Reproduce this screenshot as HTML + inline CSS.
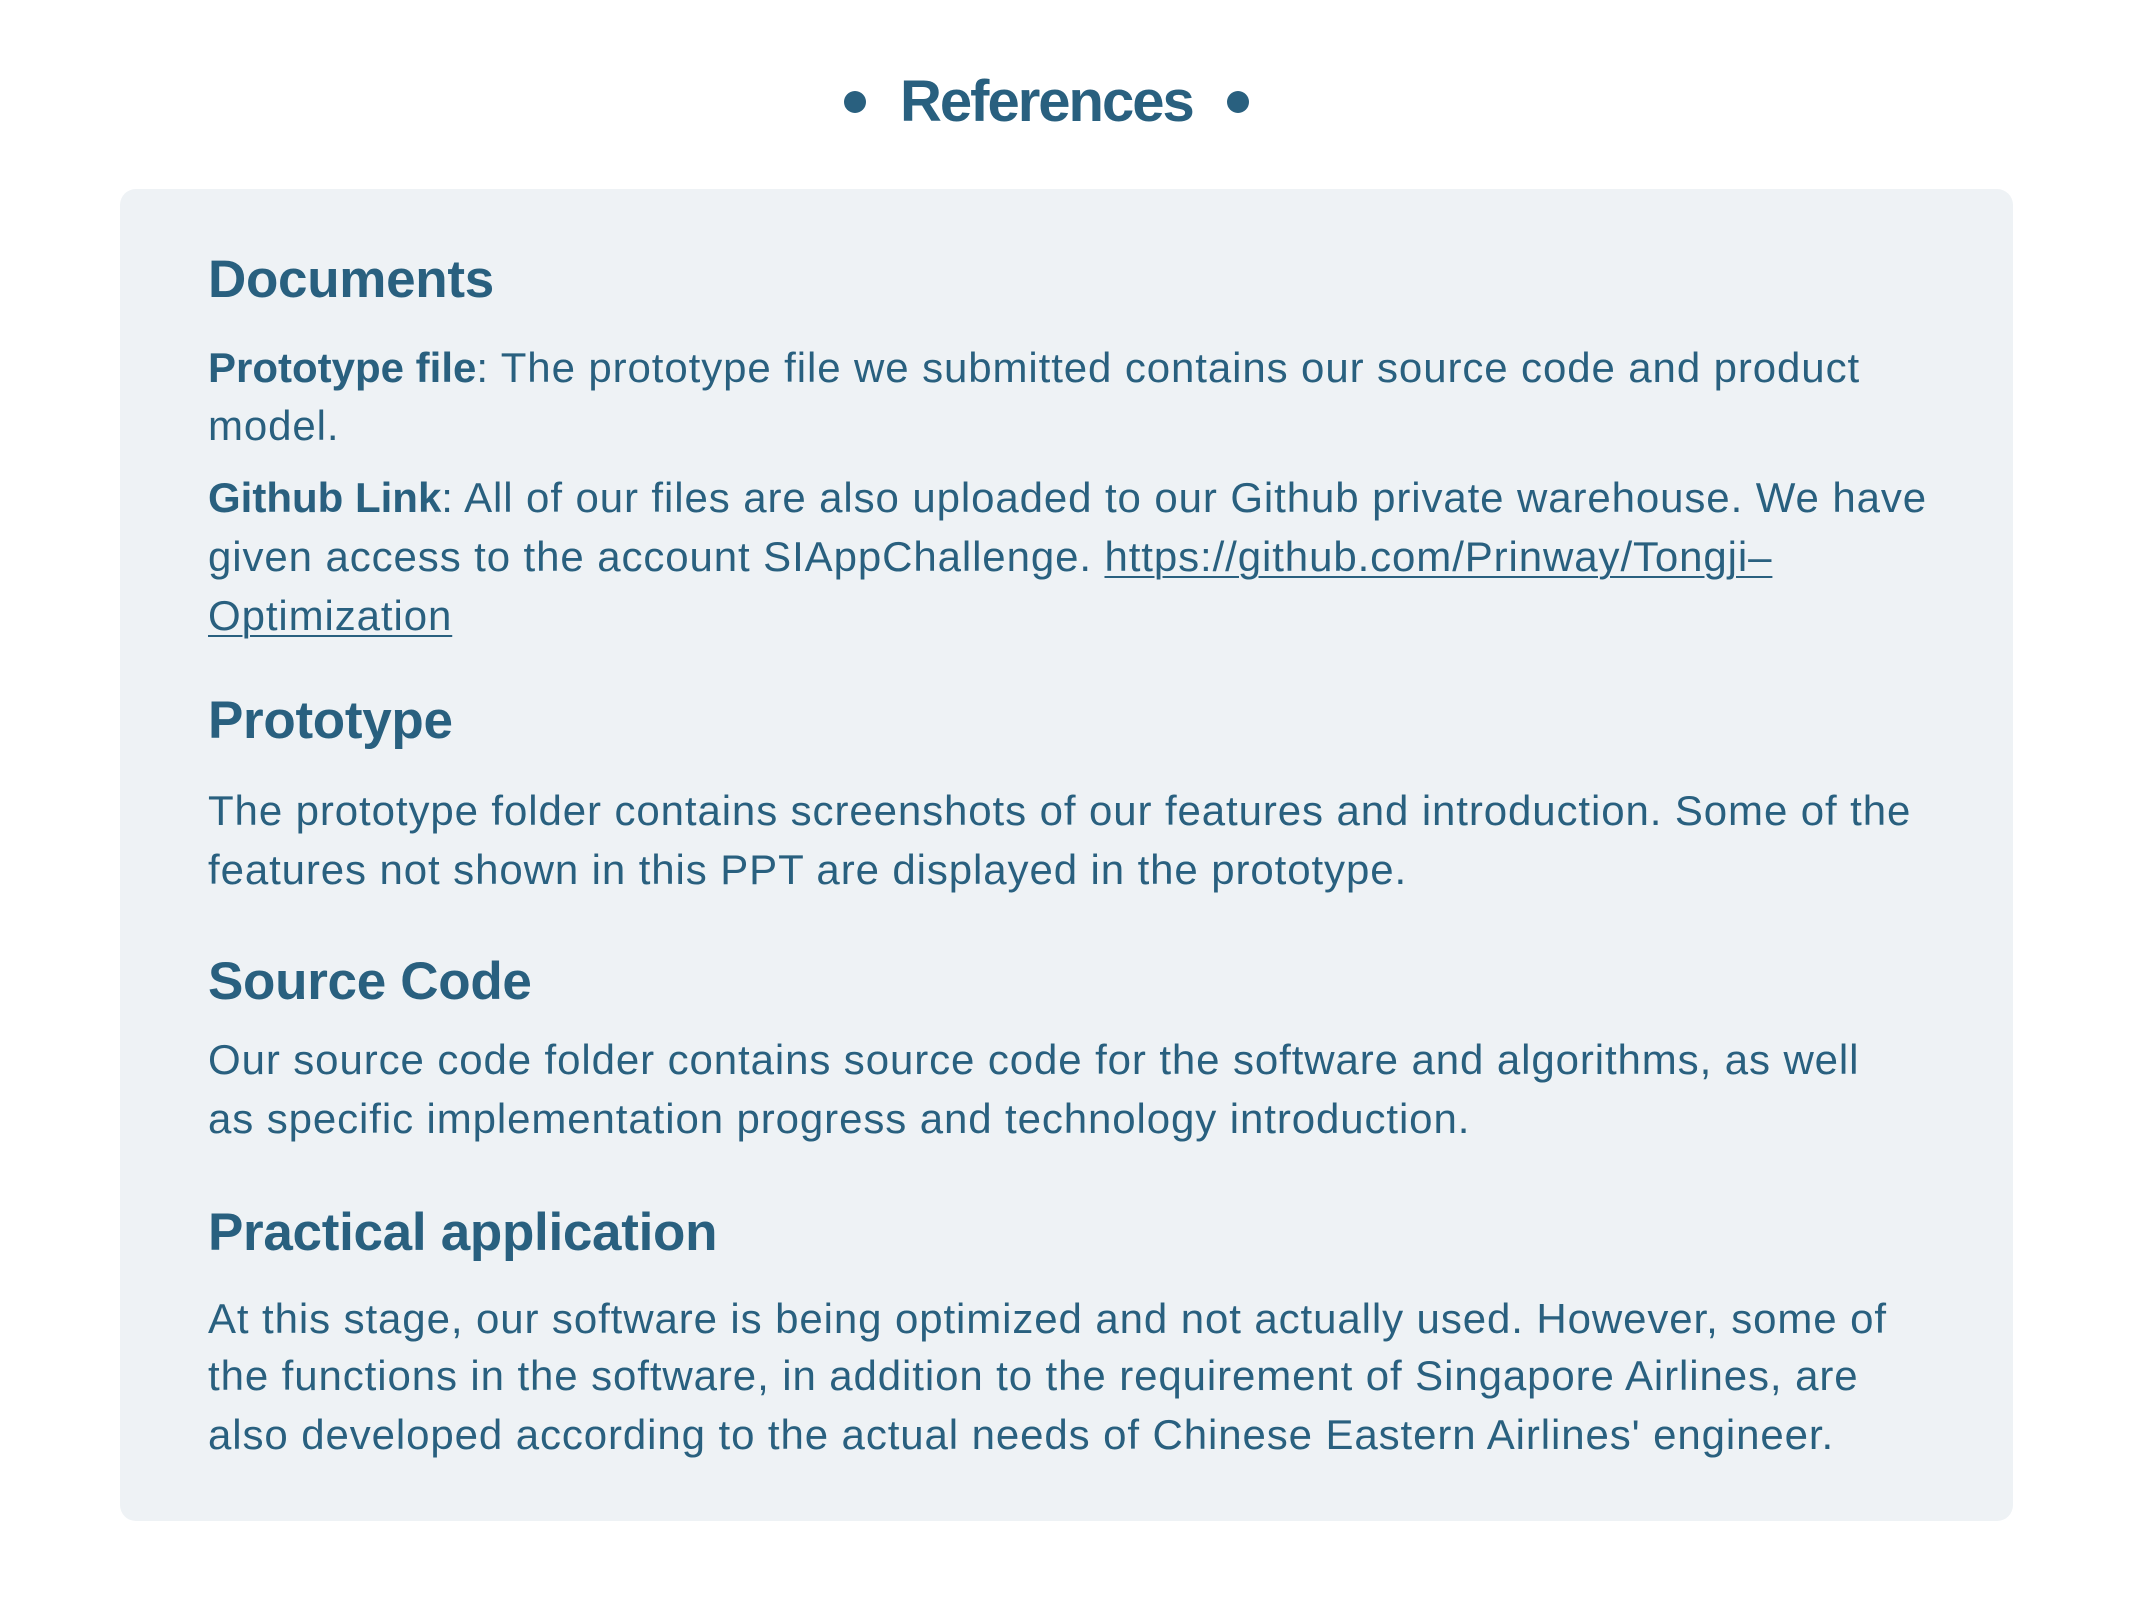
<!DOCTYPE html>
<html><head><meta charset="utf-8"><style>
html,body{margin:0;padding:0;background:#fff;}
body{width:2134px;height:1600px;position:relative;overflow:hidden;font-family:"Liberation Sans",Arial,sans-serif;color:#29607f;}
.t{position:absolute;left:900px;top:62px;white-space:nowrap;font-weight:bold;font-size:58px;line-height:80px;letter-spacing:-2px;}
.dot{position:absolute;width:22px;height:22px;border-radius:50%;background:#29607f;top:91px;}
.card{position:absolute;left:120px;top:189px;width:1893px;height:1332px;background:#eef2f5;border-radius:16px;}
.l{position:absolute;left:208px;white-space:nowrap;font-size:42px;line-height:58px;letter-spacing:0.9px;}
.h{position:absolute;left:208px;white-space:nowrap;font-size:53px;font-weight:bold;line-height:60px;letter-spacing:-0.3px;}
b{font-weight:bold;letter-spacing:0;}
u{text-decoration:underline;text-underline-offset:5px;text-decoration-thickness:2px;}
</style></head><body>
<div class="dot" style="left:844px"></div>
<div class="dot" style="left:1227px"></div>
<div class="t">References</div>
<div class="card"></div>
<div class="h" style="top:250px">Documents</div>
<div class="l" style="top:339px"><b>Prototype file</b>: The prototype file we submitted contains our source code and product</div>
<div class="l" style="top:397px">model.</div>
<div class="l" style="top:469px"><b>Github Link</b>: All of our files are also uploaded to our Github private warehouse. We have</div>
<div class="l" style="top:528px">given access to the account SIAppChallenge. <u>https://github.com/Prinway/Tongji–</u></div>
<div class="l" style="top:587px"><u>Optimization</u></div>
<div class="h" style="top:691px">Prototype</div>
<div class="l" style="top:782px">The prototype folder contains screenshots of our features and introduction. Some of the</div>
<div class="l" style="top:841px">features not shown in this PPT are displayed in the prototype.</div>
<div class="h" style="top:952px">Source Code</div>
<div class="l" style="top:1031px">Our source code folder contains source code for the software and algorithms, as well</div>
<div class="l" style="top:1090px">as specific implementation progress and technology introduction.</div>
<div class="h" style="top:1203px">Practical application</div>
<div class="l" style="top:1290px">At this stage, our software is being optimized and not actually used. However, some of</div>
<div class="l" style="top:1347px">the functions in the software, in addition to the requirement of Singapore Airlines, are</div>
<div class="l" style="top:1406px">also developed according to the actual needs of Chinese Eastern Airlines' engineer.</div>
</body></html>
